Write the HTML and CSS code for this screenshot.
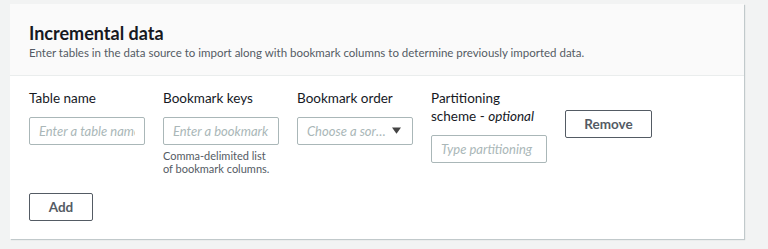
FILE: index.html
```html
<!DOCTYPE html>
<html lang="en">
<head>
    <meta charset="UTF-8">
    <meta name="viewport" content="width=device-width, initial-scale=1.0">
    <title>Incremental data</title>
    <link rel="stylesheet" href="styles.css">
</head>
<body>
    <div class="panel">
        <div class="panel-header">
            <h2>Incremental data</h2>
            <p>Enter tables in the data source to import along with bookmark columns to determine previously imported data.</p>
        </div>
        <div class="panel-body">
            <div class="table-row">
                <div class="field">
                    <label>Table name</label>
                    <input type="text" placeholder="Enter a table name">
                </div>
                <div class="field">
                    <label>Bookmark keys</label>
                    <input type="text" placeholder="Enter a bookmark key">
                    <span class="hint">Comma-delimited list<br>of bookmark columns.</span>
                </div>
                <div class="field">
                    <label>Bookmark order</label>
                    <div class="select">
                        <span>Choose a sort order</span>
                        <svg width="9" height="8" viewBox="0 0 10 8"><path d="M0 0 H10 L5 7 Z" fill="#444"/></svg>
                    </div>
                </div>
                <div class="field">
                    <label>Partitioning<br>scheme - <i>optional</i></label>
                    <input type="text" placeholder="Type partitioning">
                </div>
                <div class="field remove-cell">
                    <button class="btn">Remove</button>
                </div>
            </div>
            <button class="btn add-btn">Add</button>
        </div>
    </div>
</body>
</html>
```

FILE: styles.css
```css
body {
    margin: 0;
    padding: 4px 24px 10px 10px;
    background-color: #f2f3f3;
    font-family: Lato, 'Open Sans', sans-serif;
    color: #16191f;
}
.panel {
    background: white;
    width: 734px;
    box-shadow: 1px 1px 1px rgba(0, 33, 43, 0.2);
}
.panel-header {
    background: #fafafa;
    border-bottom: 1px solid #eaeded;
    height: 71px;
    padding: 0 19px;
    box-sizing: content-box;
}
.panel-header h2 {
    margin: 0;
    padding-top: 18px;
    font-size: 18px;
    line-height: 22px;
    font-weight: 700;
}
.panel-header p {
    margin: 1px 0 0;
    font-size: 11.5px;
    line-height: 16px;
    color: #545b64;
}
.panel-body {
    padding: 13px 19px 18px;
}
.table-row {
    display: grid;
    grid-template-columns: repeat(4, 116px) 87px;
    column-gap: 18px;
}
.field {
    display: flex;
    flex-direction: column;
}
.field label {
    font-size: 13.5px;
    line-height: 18px;
    margin-bottom: 10px;
}
.field input, .select {
    box-sizing: border-box;
    width: 116px;
    height: 28px;
    border: 1px solid #aab7b8;
    border-radius: 2px;
    padding: 0 9px;
    font-family: inherit;
    font-size: 13px;
    font-style: italic;
    color: #aab7b8;
}
.field input::placeholder {
    color: #aab7b8;
}
.select {
    display: flex;
    align-items: center;
    gap: 3px;
    padding-right: 11px;
}
.select span {
    white-space: nowrap;
    overflow: hidden;
    text-overflow: ellipsis;
    flex: 1;
}
.hint {
    font-size: 11px;
    line-height: 13px;
    color: #545b64;
    margin-top: 4px;
}
.remove-cell {
    padding-top: 21px;
}
.btn {
    box-sizing: border-box;
    height: 28px;
    width: 87px;
    background: white;
    border: 1px solid #545b64;
    border-radius: 2px;
    font-family: inherit;
    font-size: 13.5px;
    font-weight: 700;
    color: #545b64;
    cursor: pointer;
}
.add-btn {
    width: 64px;
    margin-top: 18px;
}
```
